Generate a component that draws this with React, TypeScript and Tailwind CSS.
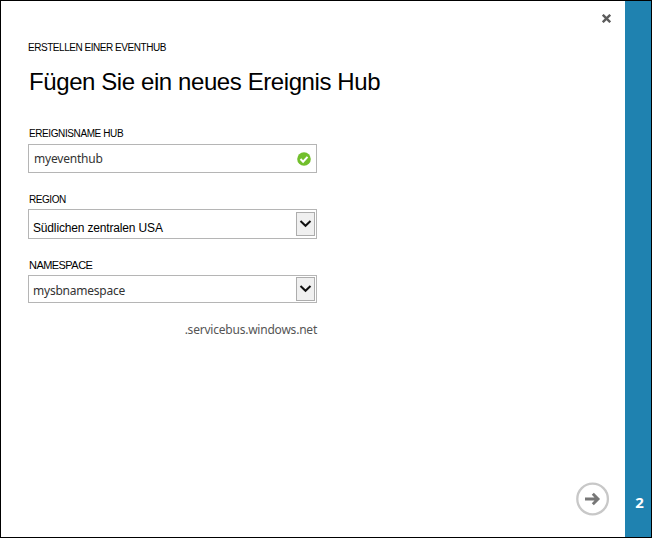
import type { ReactNode } from "react";

function Label({ children, className }: { children: ReactNode; className: string }) {
  return <div className={`whitespace-nowrap text-black ${className}`}>{children}</div>;
}

function SelectButton() {
  return (
    <span className="flex h-6 w-[19px] items-center justify-center border border-[#adadad] bg-[#f0f0f0]">
      <svg width="13" height="9" viewBox="0 0 13 9" fill="none" stroke="#111" strokeWidth="2">
        <path d="M1.5 1 6.5 5.8 11.5 1" />
      </svg>
    </span>
  );
}

export default function App() {
  return (
    <div className="flex h-[538px] w-[652px] border border-black bg-white font-['Liberation_Sans',Arial,sans-serif]">
      <main className="flex flex-1 flex-col pl-[27px]">
        <div className="flex h-9 justify-end pt-[13px] pr-[14px]">
          <svg width="9" height="9" viewBox="0 0 9 9" stroke="#5c5c5c" strokeWidth="2.4" aria-label="Schließen">
            <path d="M.8.8 8.2 8.2M8.2.8.8 8.2" />
          </svg>
        </div>
        <Label className="mt-[3px] h-4 text-[10px] leading-4 tracking-[-0.46px]">ERSTELLEN EINER EVENTHUB</Label>
        <h1 className="mt-2.5 h-8 pl-px whitespace-nowrap text-2xl leading-8 tracking-[-0.41px] text-black">
          Fügen Sie ein neues Ereignis Hub
        </h1>
        <Label className="mt-7 h-4 pl-px text-[10px] leading-4 tracking-[-0.4px]">EREIGNISNAME HUB</Label>
        <div className="mt-[2px] flex h-[29px] w-[289px] items-center justify-between border border-[#b5b5b5] pl-[5px] pr-[5px] font-['Noto_Sans',sans-serif] text-xs tracking-[-0.2px] text-[#333]">
          <span>myeventhub</span>
          <svg width="14" height="14" viewBox="0 0 14 14" fill="none">
            <circle cx="7" cy="7" r="6.8" fill="#72bf2c" />
            <path d="m3.5 7 2.6 2.7L10.5 4.8" stroke="#fff" strokeWidth="2" />
          </svg>
        </div>
        <Label className="mt-[19px] h-4 pl-px text-[10px] leading-4 tracking-[-0.45px]">REGION</Label>
        <div className="mt-px flex h-[30px] w-[289px] items-start justify-between border border-[#b5b5b5] pt-[2px] pr-px pl-1">
          <span className="pt-2 text-xs leading-4 tracking-[-0.16px] text-black">Südlichen zentralen USA</span>
          <SelectButton />
        </div>
        <Label className="mt-[18px] h-4 pl-px text-[11px] leading-4 tracking-[-0.55px]">NAMESPACE</Label>
        <div className="mt-[2px] flex h-[28px] w-[289px] items-start justify-between border border-[#b5b5b5] pt-px pr-px pl-1">
          <span className="pt-1.5 font-['Noto_Sans',sans-serif] text-xs leading-4 tracking-[-0.22px] text-[#333]">mysbnamespace</span>
          <SelectButton />
        </div>
        <div className="mt-[19px] w-[289px] text-right font-['Noto_Sans',sans-serif] text-xs leading-4 tracking-[-0.22px] text-[#555]">
          .servicebus.windows.net
        </div>
        <div className="mt-auto flex justify-end pr-[15px] pb-[21px]">
          <svg width="34" height="34" viewBox="0 0 34 34" fill="none">
            <circle cx="16.6" cy="17" r="15.3" stroke="#c8c8c8" strokeWidth="2.3" />
            <path d="M9 17H21.5M16.8 11.8 22 17 16.8 22.2" stroke="#777" strokeWidth="2.9" />
          </svg>
        </div>
      </main>
      <aside className="flex w-[26px] items-end justify-center bg-[#1f82b0] pb-[25px] pl-[3px] font-['Noto_Sans',sans-serif] text-[15px] leading-5 font-bold text-white">
        2
      </aside>
    </div>
  );
}
